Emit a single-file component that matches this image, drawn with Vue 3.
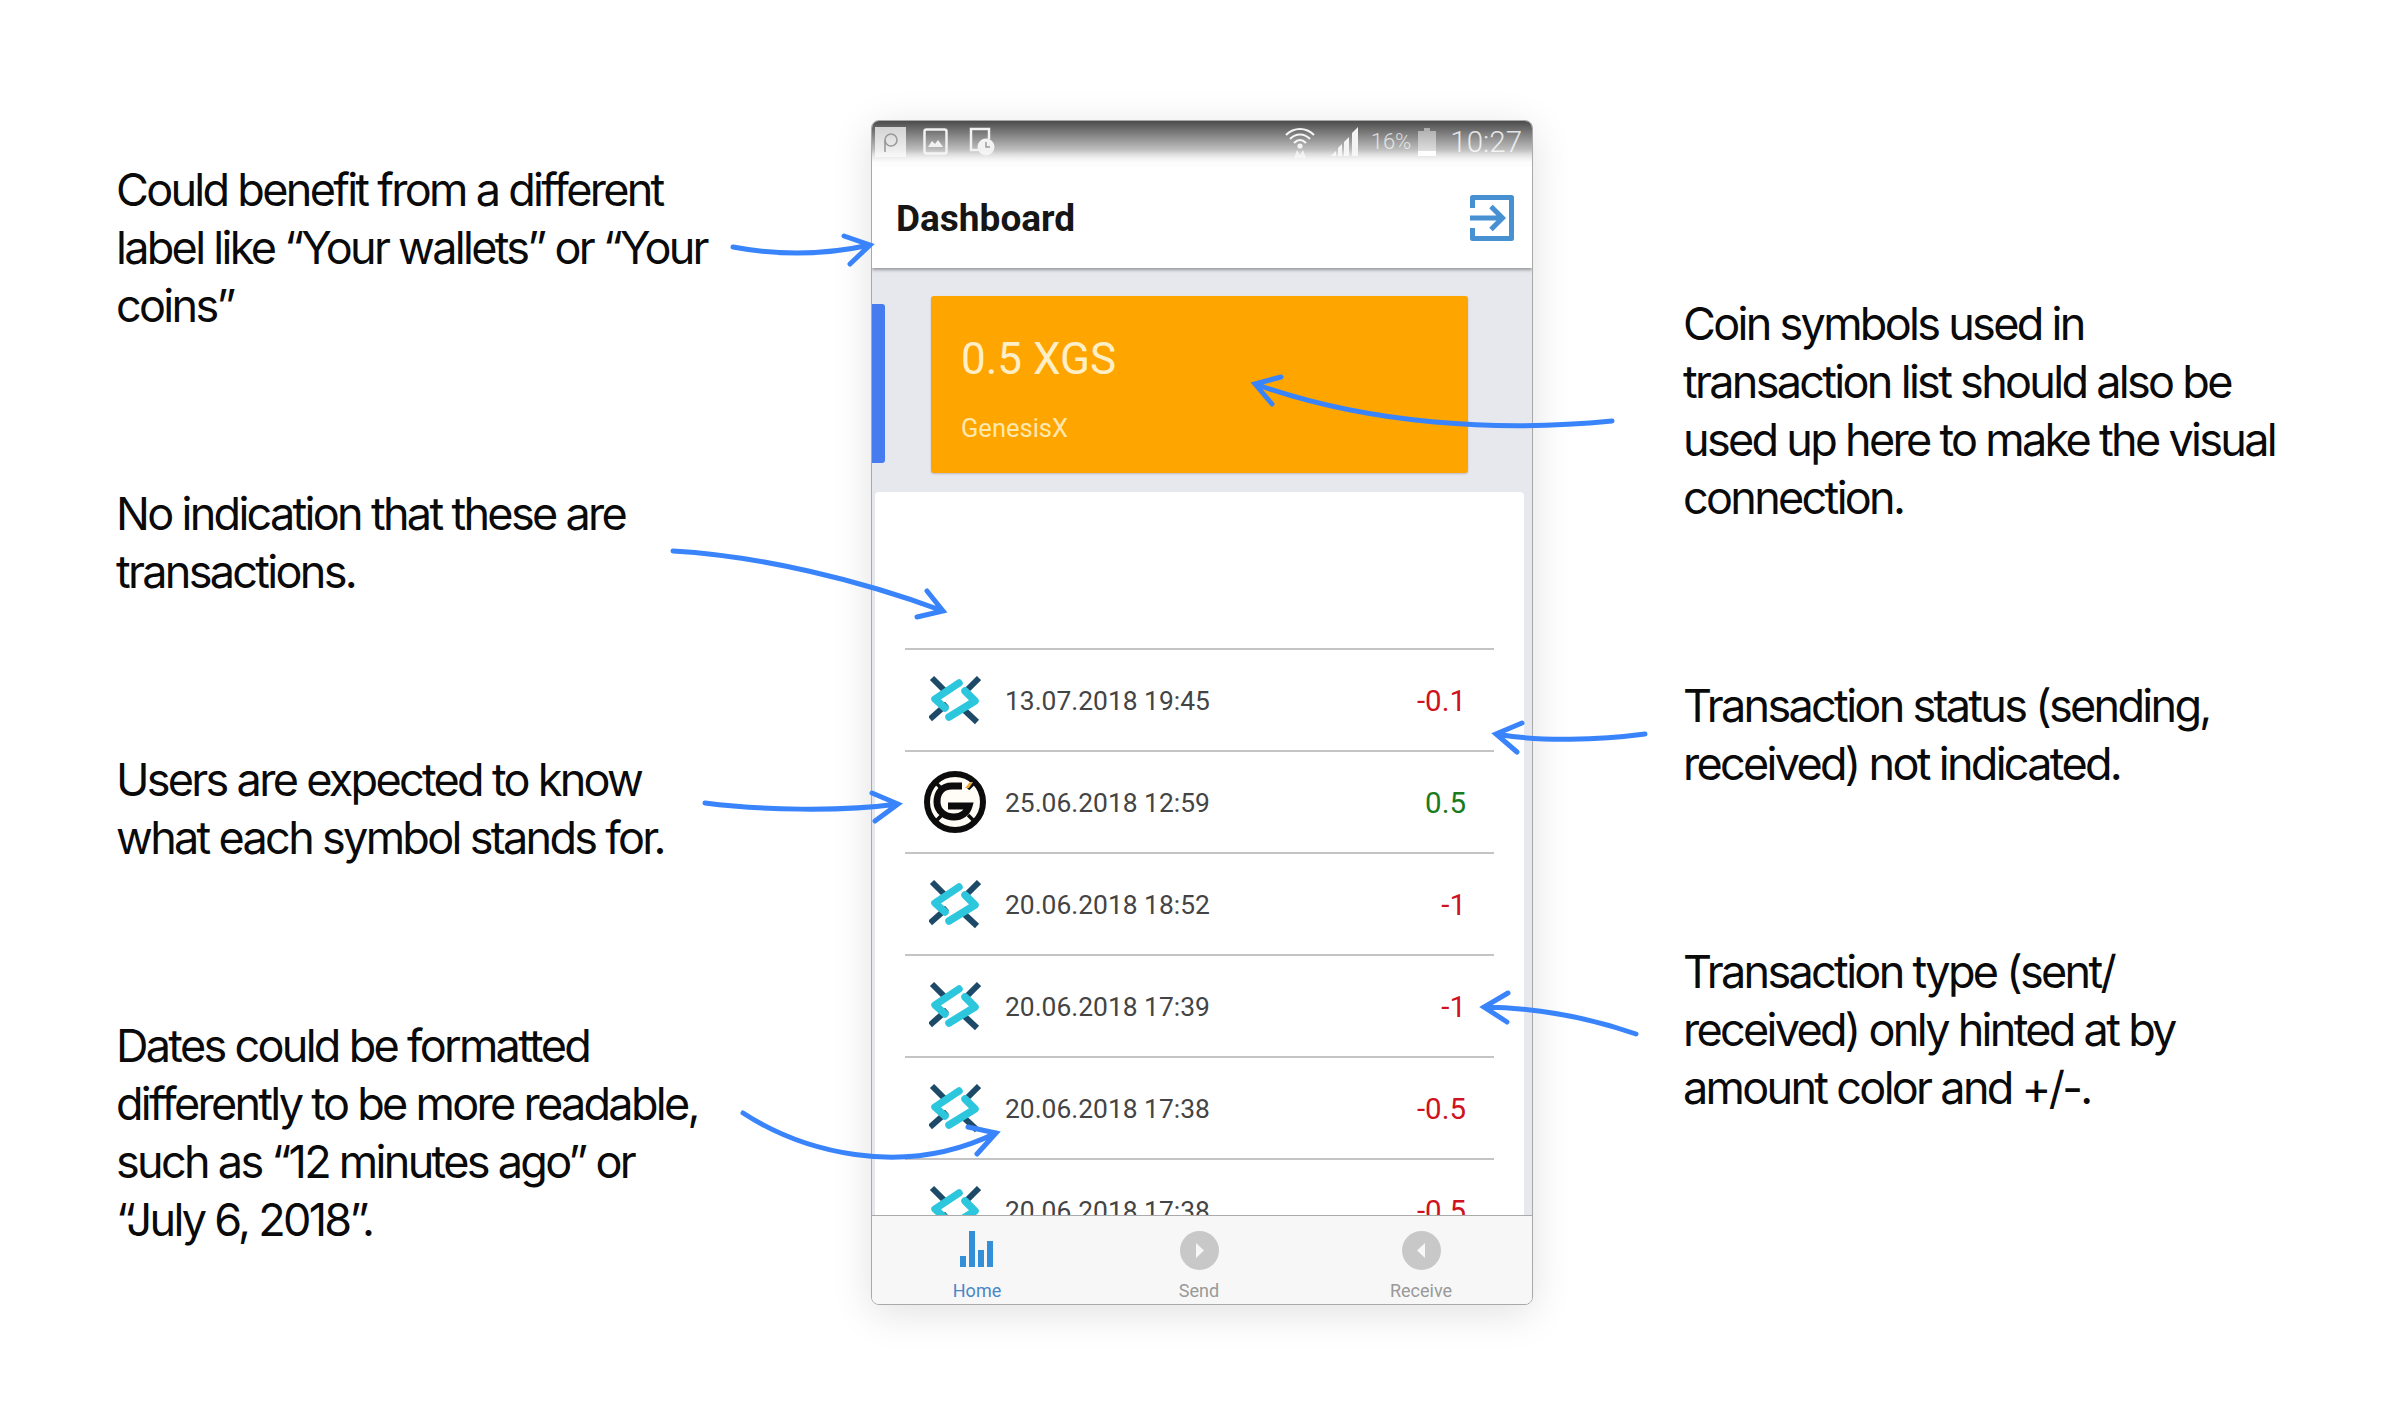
<script setup>
const leftNotes = [
  ['Could benefit from a different', 'label like “Your wallets” or “Your', 'coins”'],
  ['No indication that these are', 'transactions.'],
  ['Users are expected to know', 'what each symbol stands for.'],
  ['Dates could be formatted', 'differently to be more readable,', 'such as “12 minutes ago” or', '“July 6, 2018”.'],
]
const rightNotes = [
  ['Coin symbols used in', 'transaction list should also be', 'used up here to make the visual', 'connection.'],
  ['Transaction status (sending,', 'received) not indicated.'],
  ['Transaction type (sent/', 'received) only hinted at by', 'amount color and +/-.'],
]
const rows = [
  { coin: 'x', date: '13.07.2018 19:45', amount: '-0.1' },
  { coin: 'g', date: '25.06.2018 12:59', amount: '0.5' },
  { coin: 'x', date: '20.06.2018 18:52', amount: '-1' },
  { coin: 'x', date: '20.06.2018 17:39', amount: '-1' },
  { coin: 'x', date: '20.06.2018 17:38', amount: '-0.5' },
  { coin: 'x', date: '20.06.2018 17:38', amount: '-0.5' },
]
const arrows = [
  'M733 247Q802 260 870 245M844 236L870 245L850 264',
  'M1612 421C1500 432 1370 425 1255 384M1281 377L1255 384L1272 404',
  'M673 551C760 556 860 580 943 611M927 591L943 611L917 617',
  'M1645 734C1600 740 1540 742 1496 734M1522 723L1496 734L1517 752',
  'M705 803C760 810 840 812 898 804M872 793L898 804L875 821',
  'M1636 1034C1590 1018 1540 1008 1484 1007M1508 993L1484 1007L1507 1022',
  'M743 1113C800 1150 900 1180 996 1133M968 1127L996 1133L977 1154',
]
</script>

<template>
  <div class="page">
    <div class="notes left">
      <div v-for="(note, i) in leftNotes" :key="i" class="note">
        <div v-for="line in note" :key="line">{{ line }}</div>
      </div>
    </div>

    <div class="phone">
      <div class="statusbar">
        <span class="notif">
          <svg width="16" height="20" viewBox="0 0 16 20"><circle cx="8" cy="8" r="6" fill="none" stroke="#999" stroke-width="1.6"/><path d="M2 8V20" stroke="#999" stroke-width="1.6"/></svg>
        </span>
        <svg class="st-ic" width="25" height="27" viewBox="0 0 25 27"><rect x="1.5" y="1.5" width="22" height="24" rx="2" fill="none" stroke="#f2f2f2" stroke-width="2.5"/><path d="M5 19L9 13L12 16L15 12L20 19Z" fill="#f2f2f2"/></svg>
        <svg class="st-ic" width="26" height="29" viewBox="0 0 26 29"><path d="M12 23H2V2H20V12" fill="none" stroke="#f2f2f2" stroke-width="2.5"/><circle cx="17" cy="20" r="8.5" fill="#f2f2f2"/><path d="M17 15V20H21" fill="none" stroke="#999" stroke-width="1.4"/></svg>
        <span class="st-gap"></span>
        <svg width="30" height="32" viewBox="0 0 30 32"><g fill="none" stroke="#f4f4f4" stroke-width="2.2"><path d="M1 9C9 1 21 1 29 9"/><path d="M5 13C11 7 19 7 25 13"/><path d="M9 17C13 13 17 13 21 17"/></g><circle cx="15" cy="20" r="2.6" fill="#f4f4f4"/><path d="M9 32L12 24L15 29L18 24L21 32Z" fill="#eee"/></svg>
        <svg class="signal" width="28" height="29" viewBox="0 0 28 29"><path d="M0 29L5 24V29ZM7 29V21L11 17V29ZM13 29V15L18 10V29ZM21 29V6L27 0V29Z" fill="#f4f4f4"/></svg>
        <span class="pct">16%</span>
        <svg class="batt" width="18" height="28" viewBox="0 0 18 28"><path d="M6 0H12V3H18V28H0V3H6Z" fill="#fff" opacity=".45"/><rect y="23" width="18" height="5" fill="#fff"/></svg>
        <span class="clock">10:27</span>
      </div>

      <div class="header">
        <span class="title">Dashboard</span>
        <svg width="44" height="46" viewBox="0 0 44 46">
          <path d="M2.5 13V2.5H41.5V43.5H2.5V33" fill="none" stroke="#4790d2" stroke-width="5" stroke-linejoin="round"/>
          <path d="M0 23H31M21 11.5L32.5 23L21 34.5" fill="none" stroke="#4790d2" stroke-width="5"/>
        </svg>
      </div>

      <div class="content">
        <div class="wallets">
          <div class="bar"></div>
          <div class="card">
            <div class="balance">0.5 XGS</div>
            <div class="coin">GenesisX</div>
          </div>
        </div>

        <div class="list">
          <div v-for="(row, i) in rows" :key="i" class="row">
            <div class="icon">
              <svg v-if="row.coin === 'x'" width="52" height="52" viewBox="0 0 52 52">
                <g fill="none" stroke="#1d4a68" stroke-width="6">
                  <path d="M3 4L18 19"/><path d="M50 4L35 19"/><path d="M1 45L18 30"/><path d="M48 48L32 33"/>
                </g>
                <g fill="none" stroke="#2cc7dc" stroke-width="7.5" stroke-linecap="round" stroke-linejoin="round">
                  <path d="M30 9L6 25L16 34"/><path d="M36 17L46 27L20 43"/>
                </g>
              </svg>
              <svg v-else width="62" height="62" viewBox="0 0 62 62">
                <circle cx="31" cy="31" r="28" fill="#fffdf6" stroke="#0c0c0c" stroke-width="6"/>
                <g stroke="#0c0c0c" stroke-width="3.5">
                  <path d="M12 12L18 18"/><path d="M50 12L44 18"/><path d="M12 50L18 44"/><path d="M50 50L44 44"/>
                </g>
                <path d="M38 15H28C18 15 13 22 13 31C13 40 21 46 30 46C37 46 43 42 45 35H24" fill="none" stroke="#0c0c0c" stroke-width="7"/>
                <path d="M41 17L46 11H49L45 17Z" fill="#e8a93a"/>
              </svg>
            </div>
            <span class="date">{{ row.date }}</span>
            <span class="amount" :class="{ plus: !row.amount.startsWith('-') }">{{ row.amount }}</span>
          </div>
        </div>
      </div>

      <div class="tabs">
        <div class="tab active">
          <svg class="home-ic" width="34" height="36" viewBox="0 3 34 36"><path d="M0 28H6V39H0ZM9 3H15V39H9ZM18 22H24V39H18ZM27 13H33V39H27Z" fill="#3390d8"/></svg>
          <span>Home</span>
        </div>
        <div class="tab">
          <svg width="39" height="39" viewBox="0 0 39 39"><circle cx="19.5" cy="19.5" r="19.5" fill="#c8c8c8"/><path d="M16 12L24 19.5L16 27Z" fill="#f7f7f7"/></svg>
          <span>Send</span>
        </div>
        <div class="tab">
          <svg width="39" height="39" viewBox="0 0 39 39"><circle cx="19.5" cy="19.5" r="19.5" fill="#c8c8c8"/><path d="M23 12L15 19.5L23 27Z" fill="#f7f7f7"/></svg>
          <span>Receive</span>
        </div>
      </div>
    </div>

    <div class="notes right">
      <div v-for="(note, i) in rightNotes" :key="i" class="note">
        <div v-for="line in note" :key="line">{{ line }}</div>
      </div>
    </div>

    <svg class="arrows" width="2400" height="1426" viewBox="0 0 2400 1426">
      <path v-for="d in arrows" :key="d" :d="d" fill="none" stroke="#3a84fb" stroke-width="5" stroke-linecap="round"/>
    </svg>
  </div>
</template>

<style scoped>
.page {
  position: relative;
  display: flex;
  width: 2400px;
  height: 1426px;
  padding-top: 120px;
  box-sizing: border-box;
  overflow: hidden;
  background: #fff;
}
.notes {
  display: flex;
  flex-direction: column;
  gap: 150px;
  font-family: Inter, sans-serif;
  font-size: 45px;
  line-height: 58px;
  letter-spacing: -0.06em;
  color: #0a0a0a;
  white-space: nowrap;
}
.left {
  width: 871px;
  padding: 41px 0 0 116px;
  box-sizing: border-box;
}
.right {
  padding: 175px 0 0 150px;
}
.phone {
  display: flex;
  flex-direction: column;
  width: 662px;
  height: 1185px;
  box-sizing: border-box;
  border: 1px solid #a9a9a9;
  border-radius: 8px;
  overflow: hidden;
  background: #fff;
  box-shadow: 0 8px 40px rgba(0, 0, 0, 0.12);
  font-family: Roboto, sans-serif;
  flex-shrink: 0;
}
.statusbar {
  position: relative;
  display: flex;
  align-items: center;
  height: 45px;
  padding: 0 10px 4px 3px;
  box-sizing: border-box;
  flex-shrink: 0;
  background: linear-gradient(#4c4c4c, #fff);
  color: #fff;
}
/* the icons melt into the white header at the bottom of the bar */
.statusbar::after {
  content: "";
  position: absolute;
  left: 0;
  right: 0;
  bottom: 0;
  height: 16px;
  background: linear-gradient(rgba(255, 255, 255, 0), #fff);
}
.notif {
  display: flex;
  align-items: center;
  justify-content: center;
  width: 31px;
  height: 30px;
  background: rgba(255, 255, 255, 0.72);
}
.st-ic {
  margin-left: 17px;
}
.st-ic + .st-ic {
  margin-left: 21px;
}
.st-gap {
  flex: 1;
}
.signal {
  margin-left: 16px;
}
.pct {
  margin-left: 12px;
  font-size: 22px;
  font-weight: 300;
  opacity: 0.7;
}
.batt {
  margin-left: 7px;
}
.clock {
  margin-left: 14px;
  font-size: 29.5px;
  font-weight: 300;
  opacity: 0.8;
}
.header {
  display: flex;
  align-items: center;
  justify-content: space-between;
  height: 102px;
  padding: 2px 18px 0 24px;
  box-sizing: border-box;
  flex-shrink: 0;
  position: relative;
  background: #fff;
  box-shadow: 0 2px 3px rgba(0, 0, 0, 0.35);
}
.title {
  font-size: 37px;
  font-weight: 700;
  color: #161616;
}
.content {
  flex: 1;
  min-height: 0;
  overflow: hidden;
  background: #e6e8ee;
}
.wallets {
  display: flex;
  align-items: flex-start;
  height: 224px;
  padding-top: 28px;
  box-sizing: border-box;
}
.bar {
  width: 13px;
  height: 159px;
  margin: 8px 46px 0 0;
  border-radius: 0 3px 3px 0;
  background: #477bf0;
}
.card {
  display: flex;
  flex-direction: column;
  width: 537px;
  height: 177px;
  padding: 37px 0 0 30px;
  box-sizing: border-box;
  border-radius: 3px;
  background: #ffa500;
  box-shadow: 0 1px 2px rgba(0, 0, 0, 0.2);
}
.balance {
  font-size: 44px;
  line-height: 52px;
  color: #ffefc8;
}
.coin {
  margin-top: 27px;
  font-size: 25.5px;
  line-height: 32px;
  color: #ffe8b0;
}
.list {
  margin: 0 8px 0 3px;
  padding: 156px 30px 0;
  border-radius: 4px 4px 0 0;
  background: #fff;
}
.row {
  display: flex;
  align-items: center;
  height: 102px;
  padding: 2px 28px 0 19px;
  box-sizing: border-box;
  border-top: 2px solid #c4c4c4;
}
.icon {
  display: flex;
  align-items: center;
  justify-content: center;
  width: 62px;
  margin-top: -2px;
  flex-shrink: 0;
}
.date {
  flex: 1;
  margin-left: 19px;
  font-size: 26.4px;
  color: #444;
}
.amount {
  font-size: 29.5px;
  color: #d0121e;
}
.amount.plus {
  color: #1a7a20;
}
.tabs {
  display: grid;
  grid-template-columns: repeat(3, 222px);
  justify-content: center;
  height: 89px;
  padding-right: 6px;
  flex-shrink: 0;
  box-sizing: border-box;
  border-top: 1px solid #aaa;
  background: #f7f7f7;
}
.tab {
  display: flex;
  flex-direction: column;
  align-items: center;
  padding-top: 15px;
  font-size: 18px;
  line-height: 22px;
  color: #999;
}
.tab span {
  margin-top: 10px;
}
.tab .home-ic {
  margin-bottom: 3px;
}
.tab.active {
  color: #4a86c8;
}
.arrows {
  position: absolute;
  top: 0;
  left: 0;
  pointer-events: none;
}
</style>
